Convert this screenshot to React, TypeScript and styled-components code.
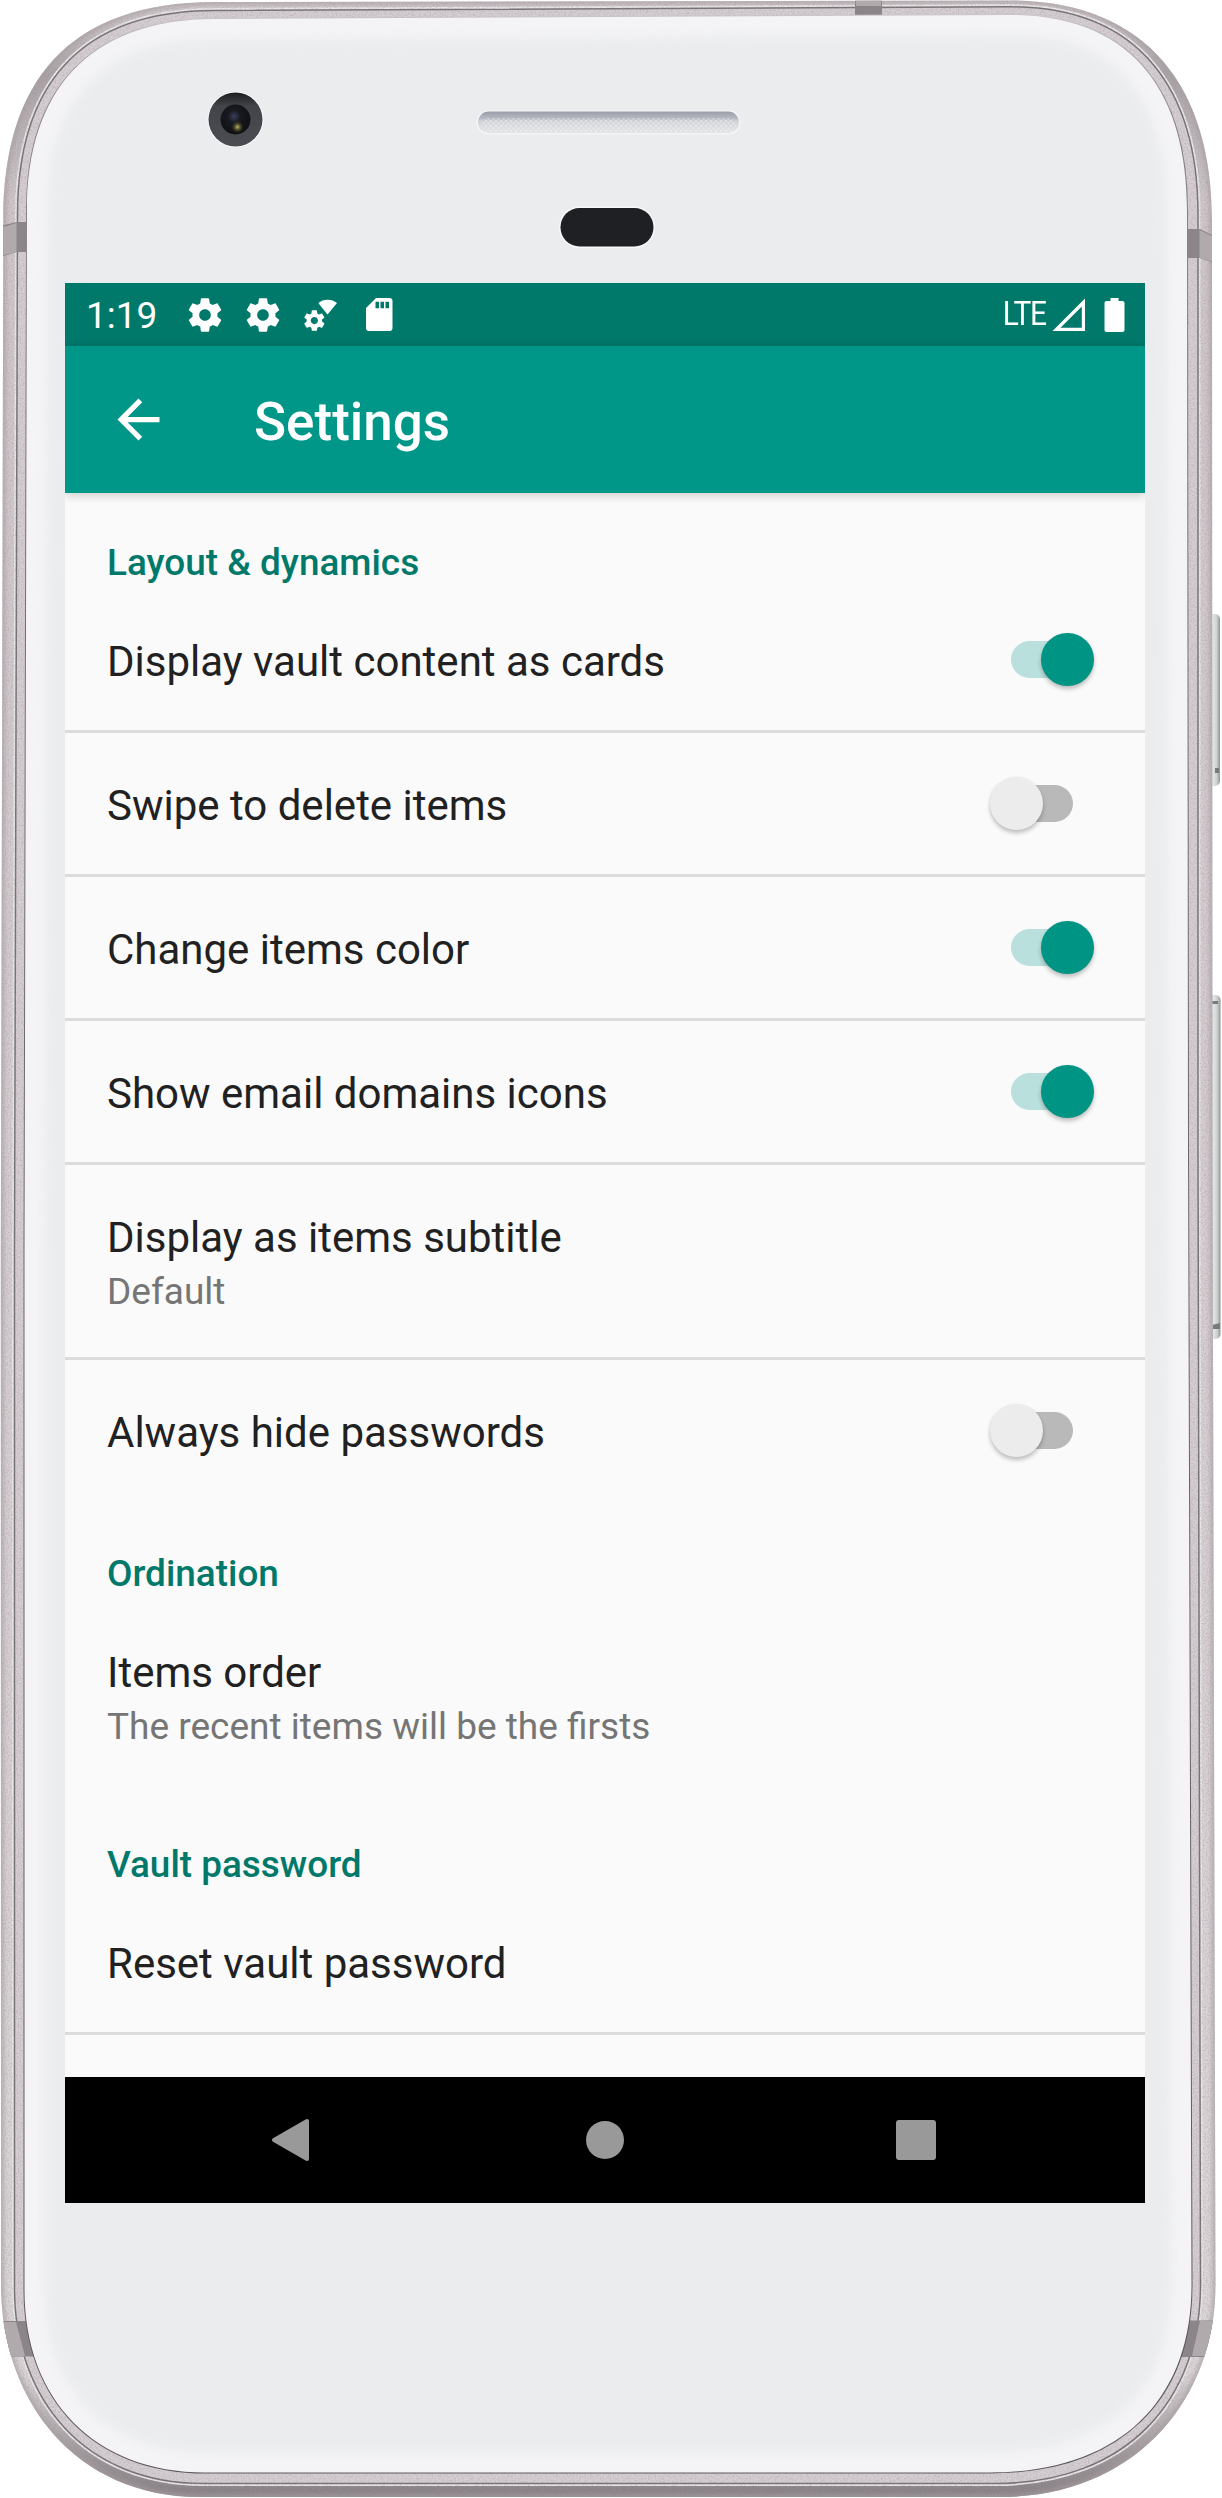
import React from "react";
import styled, { createGlobalStyle } from "styled-components";

const GlobalStyle = createGlobalStyle`
  body {
    margin: 0;
    background: #fff;
    font-family: Roboto, "Noto Sans", sans-serif;
  }
`;

const Device = styled.div`
  position: relative;
  box-sizing: border-box;
  width: 1222px;
  height: 2498px;
  padding: 283px 77px 295px 65px;
  overflow: hidden;
`;

const Chassis = styled.svg`
  position: absolute;
  left: 0;
  top: 0;
`;

const Screen = styled.main`
  position: relative;
  display: flex;
  flex-direction: column;
  width: 1080px;
  height: 1920px;
  background: #fafafa;
  overflow: hidden;
`;

const StatusBar = styled.div`
  flex: none;
  display: flex;
  align-items: center;
  justify-content: space-between;
  box-sizing: border-box;
  height: 63px;
  padding: 0 20px 0 21px;
  background: #00796b;
  color: #fff;
`;

const StatusGroup = styled.div`
  display: flex;
  align-items: center;
`;

const Clock = styled.span`
  width: 78px;
  margin-right: 21px;
  font-size: 37px;
  line-height: 63px;
  padding-top: 2px;
`;

const Network = styled.span`
  font-size: 32.5px;
  line-height: 59px;
  letter-spacing: -1.4px;
  margin-right: 6px;
  transform: scaleX(0.92);
  transform-origin: right center;
`;

const StatusIcon = styled.svg<{ $gap?: number }>`
  display: block;
  flex: none;
  margin-right: ${(p) => p.$gap ?? 0}px;
  fill: #fff;
`;

const Toolbar = styled.header`
  flex: none;
  position: relative;
  z-index: 1;
  display: flex;
  align-items: center;
  box-sizing: border-box;
  height: 147px;
  padding-left: 42px;
  gap: 84px;
  background: #009688;
  color: #fff;
  box-shadow: 0 2px 10px rgba(0, 0, 0, 0.2);
`;

const Title = styled.h1`
  margin: 0;
  padding-top: 5px;
  font-size: 53px;
  font-weight: 500;
  line-height: 62px;
`;

const List = styled.div`
  flex: 1;
  min-height: 0;
  overflow: hidden;
`;

const Category = styled.h2<{ $height: number }>`
  display: flex;
  align-items: flex-end;
  box-sizing: border-box;
  height: ${(p) => p.$height}px;
  margin: 0;
  padding: 0 42px 5px;
  color: #00796b;
  font-size: 36.9px;
  font-weight: 500;
  line-height: 43px;
`;

const Row = styled.div<{ $height: number; $divided?: boolean }>`
  display: flex;
  align-items: center;
  justify-content: space-between;
  height: ${(p) => p.$height}px;
  padding: 0 51px 0 42px;
  border-bottom: ${(p) => (p.$divided ? "3px solid #dcdcdc" : "0")};
`;

const RowText = styled.div`
  display: flex;
  flex-direction: column;
`;

const RowTitle = styled.span`
  color: #212121;
  font-size: 42px;
  line-height: 49px;
  padding-top: 3px;
`;

const RowSummary = styled.span`
  color: #757575;
  font-size: 37px;
  line-height: 43px;
  padding-top: 8px;
`;

const Track = styled.div<{ $on: boolean }>`
  position: relative;
  width: 62px;
  height: 37px;
  margin-right: 21px;
  border-radius: 19px;
  background: ${(p) => (p.$on ? "#b9e0dc" : "#b9b9b9")};
`;

const Thumb = styled.div<{ $on: boolean }>`
  position: absolute;
  top: -8px;
  left: ${(p) => (p.$on ? 30 : -21)}px;
  width: 52.5px;
  height: 52.5px;
  border-radius: 50%;
  background: ${(p) => (p.$on ? "#009485" : "#ececec")};
  box-shadow: 0 3px 4px rgba(0, 0, 0, 0.24), 0 0 2px rgba(0, 0, 0, 0.05);
`;

const NavBar = styled.nav`
  flex: none;
  display: flex;
  align-items: center;
  justify-content: space-between;
  box-sizing: border-box;
  height: 126px;
  padding: 0 209px 0 205px;
  background: #000;
`;

const GEAR =
  "M19.43 12.98c.04-.32.07-.64.07-.98s-.03-.66-.07-.98l2.11-1.65c.19-.15.24-.42.12-.64l-2-3.46c-.12-.22-.39-.3-.61-.22l-2.49 1c-.52-.4-1.08-.73-1.69-.98l-.38-2.65C14.46 2.18 14.25 2 14 2h-4c-.25 0-.46.18-.49.42l-.38 2.65c-.61.25-1.17.59-1.69.98l-2.49-1c-.23-.09-.49 0-.61.22l-2 3.46c-.13.22-.07.49.12.64l2.11 1.65c-.04.32-.07.65-.07.98s.03.66.07.98l-2.11 1.65c-.19.15-.24.42-.12.64l2 3.46c.12.22.39.3.61.22l2.49-1c.52.4 1.08.73 1.69.98l.38 2.65c.03.24.24.42.49.42h4c.25 0 .46-.18.49-.42l.38-2.65c.61-.25 1.17-.59 1.69-.98l2.49 1c.23.09.49 0 .61-.22l2-3.46c.12-.22.07-.49-.12-.64l-2.11-1.65zM12 15.5c-1.93 0-3.5-1.57-3.5-3.5s1.57-3.5 3.5-3.5 3.5 1.57 3.5 3.5-1.57 3.5-3.5 3.5z";

const OUTER =
  "M3.3 220C3.3 82 68 2 215 2L1010 .4C1145 .4 1212 85 1212 220L1212.5 1150L1215.5 2285C1215.5 2400 1135 2497 1000 2497L200 2497C75 2497 1 2400 1 2285L.8 1250Z";
const SEAM =
  "M17.5 215C17.5 87 78 10.5 215 10.5L1010 6.8C1140 6.8 1198 90 1198 215L1198 1150L1200.5 2285C1200.5 2400 1127 2483.5 995 2483.5L203 2483.5C85 2483.5 14.5 2400 14.5 2288L14.5 1250Z";
const GLASS =
  "M27 210C27 92 88 19 215 19L1010 15C1135 15 1187 95 1187 210L1188 1150L1191.5 2285C1191.5 2400 1120 2472.5 990 2472.5L205 2472.5C95 2472.5 24.5 2400 24.5 2290L24.5 1250Z";

function DeviceFrame() {
  return (
    <Chassis width="1222" height="2498" viewBox="0 0 1222 2498">
      <defs>
        <linearGradient id="metal" x1="0" y1="0" x2="0" y2="1">
          <stop offset="0" stopColor="#d6cfd2" />
          <stop offset="0.03" stopColor="#aaa3a6" />
          <stop offset="0.08" stopColor="#cfc8cb" />
          <stop offset="0.5" stopColor="#d6cfd3" />
          <stop offset="0.95" stopColor="#dcd7d8" />
          <stop offset="0.985" stopColor="#9b9497" />
          <stop offset="1" stopColor="#857e82" />
        </linearGradient>
        <linearGradient id="rim" x1="0" y1="0" x2="0" y2="1">
          <stop offset="0" stopColor="#c9c5c8" />
          <stop offset="0.04" stopColor="#8a868a" />
          <stop offset="0.2" stopColor="#737075" />
          <stop offset="1" stopColor="#5d5a5e" />
        </linearGradient>
        <linearGradient id="key" x1="0" y1="0" x2="1" y2="0">
          <stop offset="0" stopColor="#a9adac" />
          <stop offset="0.55" stopColor="#e3e7e4" />
          <stop offset="0.8" stopColor="#cdd2d0" />
          <stop offset="1" stopColor="#8f9492" />
        </linearGradient>
        <linearGradient id="grille" x1="0" y1="0" x2="0" y2="1">
          <stop offset="0" stopColor="#9a9ca8" />
          <stop offset="0.3" stopColor="#b4b6c0" />
          <stop offset="0.45" stopColor="#d3d4d8" />
          <stop offset="1" stopColor="#e3e4e6" />
        </linearGradient>
        <pattern id="mesh" width="5" height="5" patternUnits="userSpaceOnUse">
          <path d="M0 0h2v2H0zM2.5 2.5h2v2h-2z" fill="#fff" opacity="0.35" />
        </pattern>
        <radialGradient id="lens" cx="0.45" cy="0.4" r="0.6">
          <stop offset="0" stopColor="#3a3d5e" />
          <stop offset="0.35" stopColor="#191a20" />
          <stop offset="1" stopColor="#0f1012" />
        </radialGradient>
        <linearGradient id="ring" x1="0" y1="0" x2="0" y2="1">
          <stop offset="0" stopColor="#1c1d20" />
          <stop offset="0.25" stopColor="#434449" />
          <stop offset="1" stopColor="#4c4d53" />
        </linearGradient>
        <radialGradient id="glint">
          <stop offset="0" stopColor="#c4ba60" />
          <stop offset="1" stopColor="#2b2c12" stopOpacity="0" />
        </radialGradient>
        <filter id="soft" x="-5%" y="-5%" width="110%" height="110%">
          <feGaussianBlur stdDeviation="6" />
        </filter>
        <filter id="edge" x="-5%" y="-5%" width="110%" height="110%">
          <feGaussianBlur stdDeviation="2" />
        </filter>
        <filter id="grain" x="0" y="0" width="100%" height="100%">
          <feTurbulence type="fractalNoise" baseFrequency="0.6" numOctaves="2" seed="4" />
          <feColorMatrix values="0 0 0 0 .35  0 0 0 0 .3  0 0 0 0 .33  1.6 0 0 0 -.65" />
        </filter>
        <clipPath id="outerClip">
          <path d={OUTER} />
        </clipPath>
        <clipPath id="glassClip">
          <path d={GLASS} />
        </clipPath>
      </defs>

      <rect x="1204" y="614" width="16" height="172" rx="5" fill="url(#key)" />
      <rect x="1204" y="995" width="16.500" height="344" rx="5" fill="url(#key)" />
      <path d="M1212 1001h6v3h-6zM1212 1325l8-2v6h-8zM1215 768h4v5h-4z" fill="#777b79" />

      <path d={OUTER} fill="url(#metal)" />
      <g clipPath="url(#outerClip)">
        <path
          d={OUTER}
          fill="none"
          stroke="#a79fa3"
          strokeWidth="6"
          filter="url(#edge)"
          opacity="0.7"
        />
        <path d={SEAM} fill="none" stroke="#eae6e8" strokeWidth="5" />
        <path d={SEAM} fill="#d5ced2" stroke="#757074" strokeWidth="1.5" />
        <rect width="1222" height="2498" filter="url(#grain)" opacity="0.6" />
        <g fill="#8b8589">
          <path d="M0 226L17 222H28V252H17L0 257Z" />
          <path d="M1186 229H1200L1214 236V263L1200 258H1186Z" />
          <path d="M0 2321H40V2356.500H0Z" />
          <path d="M1180 2320.500H1220V2357H1180Z" />
          <path d="M855 0H882V18H855Z" />
        </g>
        <g fill="#b0aaad">
          <path d="M0 228L16.500 223V252L0 256Z" />
          <path d="M1199.500 230L1214 237V262L1199.500 258Z" />
          <path d="M0 2322H16L25 2356H0Z" />
          <path d="M1220 2321H1200L1192 2356H1220Z" />
          <path d="M856 0H881V6H856Z" />
        </g>
      </g>
      <path d={GLASS} fill="#ebecee" stroke="url(#rim)" strokeWidth="2" />
      <g clipPath="url(#glassClip)">
        <path d={GLASS} fill="none" stroke="#f4f4f6" strokeWidth="40" filter="url(#soft)" />
      </g>

      <circle cx="235.500" cy="119.500" r="28" fill="#fafafa" />
      <circle cx="235.500" cy="119.500" r="27" fill="url(#ring)" />
      <circle cx="235.500" cy="119.500" r="15" fill="url(#lens)" />
      <circle cx="237.500" cy="127" r="6.500" fill="url(#glint)" />

      <rect x="476.500" y="110.500" width="264" height="24" rx="12" fill="#f4f5f6" />
      <rect x="478" y="111.500" width="261" height="21.500" rx="10.700" fill="url(#grille)" />
      <rect x="481" y="118" width="255" height="14" rx="7" fill="url(#mesh)" />

      <rect x="559" y="206.500" width="96" height="41.500" rx="20.700" fill="#f8f8f9" />
      <rect x="560.500" y="208" width="93" height="38.500" rx="19.200" fill="#1e2023" />
    </Chassis>
  );
}

function Switch({ on }: { on: boolean }) {
  return (
    <Track $on={on} role="switch" aria-checked={on}>
      <Thumb $on={on} />
    </Track>
  );
}

type Item = {
  title: string;
  summary?: string;
  on?: boolean;
  divided?: boolean;
  height?: number;
};

type Section = { name: string; height: number; items: Item[] };

const sections: Section[] = [
  {
    name: "Layout & dynamics",
    height: 96,
    items: [
      { title: "Display vault content as cards", on: true, divided: true },
      { title: "Swipe to delete items", on: false, divided: true },
      { title: "Change items color", on: true, divided: true },
      { title: "Show email domains icons", on: true, divided: true },
      { title: "Display as items subtitle", summary: "Default", divided: true, height: 192 },
      { title: "Always hide passwords", on: false },
    ],
  },
  {
    name: "Ordination",
    height: 99,
    items: [
      { title: "Items order", summary: "The recent items will be the firsts", height: 192 },
    ],
  },
  {
    name: "Vault password",
    height: 99,
    items: [{ title: "Reset vault password", divided: true }],
  },
];

export default function App() {
  return (
    <>
      <GlobalStyle />
      <Device>
        <DeviceFrame />
        <Screen>
          <StatusBar>
            <StatusGroup>
              <Clock>1:19</Clock>
              <StatusIcon width="40" height="40" viewBox="0 0 24 24" $gap={18}>
                <path d={GEAR} />
              </StatusIcon>
              <StatusIcon width="40" height="40" viewBox="0 0 24 24" $gap={16}>
                <path d={GEAR} />
              </StatusIcon>
              <StatusIcon width="42" height="42" viewBox="0 0 42 42" $gap={25}>
                <path d={GEAR} transform="translate(3 14.200) scale(1.03)" />
                <path d="M19.300 9C24 4.500 33 4.500 38 9L28.500 20.500Z" />
              </StatusIcon>
              <StatusIcon width="27" height="33" viewBox="0 0 27 33">
                <path
                  fillRule="evenodd"
                  d="M10 0H23.500a3 3 0 0 1 3 3V30a3 3 0 0 1-3 3H3a3 3 0 0 1-3-3V10ZM9.500 3.700V10.300H13V3.700ZM14.500 3.700V10.300H18V3.700ZM19.500 3.700V10.300H23V3.700Z"
                />
              </StatusIcon>
            </StatusGroup>
            <StatusGroup>
              <Network>LTE</Network>
              <StatusIcon width="34" height="34" viewBox="0 0 34 34" $gap={18}>
                <path fillRule="evenodd" d="M.5 33L33 .5V33ZM8.500 29.800H29.800V8.500Z" />
              </StatusIcon>
              <StatusIcon width="21" height="34" viewBox="0 0 21 34">
                <path d="M6.500 0h8v3h4a2 2 0 0 1 2 2v27a2 2 0 0 1-2 2h-16a2 2 0 0 1-2-2V5a2 2 0 0 1 2-2h4z" />
              </StatusIcon>
            </StatusGroup>
          </StatusBar>
          <Toolbar>
            <StatusIcon width="63" height="63" viewBox="0 0 24 24">
              <path d="M20 11H7.830l5.590-5.590L12 4l-8 8 8 8 1.410-1.410L7.830 13H20v-2z" />
            </StatusIcon>
            <Title>Settings</Title>
          </Toolbar>
          <List>
            {sections.map((section) => (
              <React.Fragment key={section.name}>
                <Category $height={section.height}>{section.name}</Category>
                {section.items.map((item) => (
                  <Row key={item.title} $height={item.height ?? 141} $divided={item.divided}>
                    <RowText>
                      <RowTitle>{item.title}</RowTitle>
                      {item.summary && <RowSummary>{item.summary}</RowSummary>}
                    </RowText>
                    {item.on !== undefined && <Switch on={item.on} />}
                  </Row>
                ))}
              </React.Fragment>
            ))}
          </List>
          <NavBar>
            <svg width="44" height="44" viewBox="0 0 44 44">
              <path
                d="M4 22L37 3V41Z"
                fill="#999"
                stroke="#999"
                strokeWidth="4"
                strokeLinejoin="round"
              />
            </svg>
            <svg width="40" height="40" viewBox="0 0 40 40">
              <circle cx="20" cy="20" r="19" fill="#999" />
            </svg>
            <svg width="40" height="40" viewBox="0 0 40 40">
              <rect width="40" height="40" rx="3" fill="#999" />
            </svg>
          </NavBar>
        </Screen>
      </Device>
    </>
  );
}
